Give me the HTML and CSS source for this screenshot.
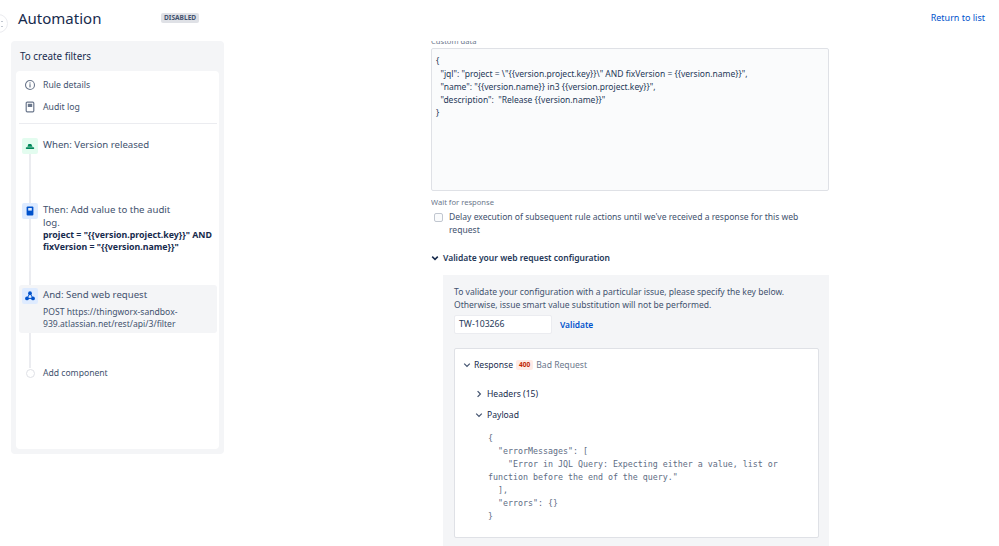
FILE: index.html
```html
<!DOCTYPE html>
<html lang="en">
<head>
<meta charset="utf-8">
<title>Automation</title>
<link rel="stylesheet" href="styles.css">
</head>
<body>
<div class="page">
  <header class="header">
    <span class="back-circle"><span class="back-dots"></span></span>
    <h1 class="title">Automation</h1>
    <span class="lozenge">DISABLED</span>
    <a class="return-link">Return to list</a>
  </header>
  <div class="content">
    <aside class="sidebar">
      <div class="rule-name">To create filters</div>
      <div class="rule-card">
        <div class="meta-row">
          <svg class="meta-icon" viewBox="0 0 12 12"><circle cx="6" cy="6" r="4.5" fill="none" stroke="#6b778c" stroke-width="1.1"/><rect x="5.4" y="5.2" width="1.2" height="3.2" fill="#6b778c"/><rect x="5.4" y="3.4" width="1.2" height="1.2" fill="#6b778c"/></svg>
          <span>Rule details</span>
        </div>
        <div class="meta-row">
          <svg class="meta-icon" viewBox="0 0 12 12"><rect x="2.2" y="1.2" width="7.6" height="9.6" rx="1" fill="none" stroke="#6b778c" stroke-width="1.2"/><rect x="3.8" y="2.8" width="4.4" height="3.2" fill="#6b778c"/></svg>
          <span>Audit log</span>
        </div>
        <div class="divider"></div>
        <div class="steps">
          <div class="rail"></div>
          <div class="step step-when">
            <span class="step-icon icon-green">
              <svg viewBox="0 0 12 12" class="step-svg"><path d="M3.4 6.8 L4.4 4 H7.2 L8.6 6.8 Z" fill="#00875a"/><rect x="1.8" y="7.2" width="8.4" height="1.8" rx=".7" fill="#00875a"/></svg>
            </span>
            <div class="step-title">When: Version released</div>
          </div>
          <div class="step step-then">
            <span class="step-icon icon-blue">
              <svg viewBox="0 0 12 12" class="step-svg"><rect x="2.6" y="1.4" width="6.8" height="9.2" rx="1" fill="#0052cc"/><rect x="4.2" y="3" width="3.6" height="2.6" fill="#deebff"/></svg>
            </span>
            <div class="step-body">
              <div class="step-title narrow">Then: Add value to the audit log.</div>
              <div class="step-bold">project = "{{version.project.key}}" AND fixVersion = "{{version.name}}"</div>
            </div>
          </div>
          <div class="step step-and">
            <span class="step-icon icon-blue">
              <svg viewBox="0 0 12 12" class="step-svg"><circle cx="6" cy="3.2" r="1.9" fill="#0052cc"/><circle cx="3" cy="8.4" r="1.9" fill="#0052cc"/><circle cx="9" cy="8.4" r="1.9" fill="#0052cc"/><path d="M6 3.2 L3 8.4 H9 Z" fill="none" stroke="#0052cc" stroke-width="1"/></svg>
            </span>
            <div class="step-body and-body">
              <div class="step-title">And: Send web request</div>
              <div class="step-desc">POST https://thingworx-sandbox-939.atlassian.net/rest/api/3/filter</div>
            </div>
          </div>
          <div class="step step-add">
            <span class="add-dot"></span>
            <div class="add-label">Add component</div>
          </div>
        </div>
      </div>
    </aside>
    <main class="main">
      <div class="clipped-label"><span class="clipped-text">Custom data</span></div>
      <div class="code-box">{
  "jql": "project = \"{{version.project.key}}\" AND fixVersion = {{version.name}}",
  "name": "{{version.name}} in3 {{version.project.key}}",
  "description":  "Release {{version.name}}"
}</div>
      <div class="field-label wait-label">Wait for response</div>
      <div class="check-row">
        <span class="checkbox"></span>
        <span class="check-text">Delay execution of subsequent rule actions until we've received a response for this web request</span>
      </div>
      <div class="validate-head">
        <svg class="chev" viewBox="0 0 8 8"><path d="M1.2 2.6 L4 5.4 L6.8 2.6" fill="none" stroke="#172b4d" stroke-width="1.5"/></svg>
        <span>Validate your web request configuration</span>
      </div>
      <section class="validate-panel">
        <p class="validate-text">To validate your configuration with a particular issue, please specify the key below. Otherwise, issue smart value substitution will not be performed.</p>
        <div class="validate-row">
          <div class="key-input">TW-103266</div>
          <a class="validate-link">Validate</a>
        </div>
        <div class="response-card">
          <div class="response-head">
            <svg class="chev" viewBox="0 0 8 8"><path d="M1.2 2.6 L4 5.4 L6.8 2.6" fill="none" stroke="#42526e" stroke-width="1.2"/></svg>
            <span class="response-word">Response</span>
            <span class="status-badge">400</span>
            <span class="status-text">Bad Request</span>
          </div>
          <div class="sub-head headers-head">
            <svg class="chev" viewBox="0 0 8 8"><path d="M2.6 1.2 L5.4 4 L2.6 6.8" fill="none" stroke="#42526e" stroke-width="1.2"/></svg>
            <span>Headers (15)</span>
          </div>
          <div class="sub-head payload-head">
            <svg class="chev" viewBox="0 0 8 8"><path d="M1.2 2.6 L4 5.4 L6.8 2.6" fill="none" stroke="#42526e" stroke-width="1.2"/></svg>
            <span>Payload</span>
          </div>
          <pre class="payload">{
  "errorMessages": [
    "Error in JQL Query: Expecting either a value, list or
function before the end of the query."
  ],
  "errors": {}
}</pre>
        </div>
      </section>
    </main>
  </div>
</div>
</body>
</html>
```
FILE: styles.css
```css
* { box-sizing: border-box; }
html, body { margin: 0; height: 100%; overflow: hidden; background: #fff; }
body { font-family: "Noto Sans", "Open Sans", sans-serif; font-size: 10px; color: #42526e; }
.page { width: 999px; height: 546px; overflow: hidden; display: flex; flex-direction: column; }

.header { height: 41px; flex: none; display: flex; align-items: flex-start; position: relative; }
.back-circle { position: absolute; left: -11px; top: 14px; width: 19px; height: 19px; border-radius: 50%; border: 1px solid #ebecf0; background: #fff; }
.back-dots { position: absolute; left: 11px; top: 6px; width: 2px; height: 6px; border-top: 1px solid #c1c7d0; border-bottom: 1px solid #c1c7d0; }
.title { margin: 7px 0 0 18px; width: 143px; font-size: 15px; line-height: 22px; font-weight: 400; color: #172b4d; }
.lozenge { margin-top: 13px; height: 10px; padding: 0 3px; border-radius: 2px; background: #dfe1e6; color: #42526e; font-size: 6.6px; line-height: 10px; font-weight: 700; }
.return-link { margin: 11px 14px 0 auto; font-size: 9px; line-height: 13px; color: #0052cc; }

.content { flex: 1; min-height: 0; display: flex; align-items: flex-start; }
.sidebar { width: 213px; height: 413px; margin-left: 11px; padding: 0 5px 5px; background: #f4f5f7; border-radius: 4px; display: flex; flex-direction: column; flex: none; }
.rule-name { height: 30px; padding: 8px 4px 0; font-size: 9.85px; line-height: 14px; color: #172b4d; }
.rule-card { flex: 1; background: #fff; border-radius: 4px; padding: 3px 2px 0 3px; }
.meta-row { height: 22px; display: flex; align-items: center; gap: 7px; padding-left: 5px; font-size: 8.7px; color: #42526e; }
.meta-icon { width: 12px; height: 12px; flex: none; }
.divider { height: 1px; background: #ebecf0; margin-top: 5px; }

.steps { position: relative; }
.rail { position: absolute; left: 10px; top: 24px; width: 2px; height: 220px; background: #ebecf0; }
.step { position: relative; display: flex; gap: 5px; }
.step-icon { width: 16px; height: 16px; flex: none; margin-left: 3px; border-radius: 2px; display: flex; align-items: center; justify-content: center; }
.icon-green { background: #e3fcef; }
.icon-blue { background: #deebff; }
.step-svg { width: 12px; height: 12px; }
.step-when { height: 65px; padding-top: 14px; }
.step-then { height: 96px; padding-top: 14px; }
.step-and { height: 48px; background: #f4f5f7; border-radius: 3px; padding-top: 3px; }
.step-add { margin-top: 33px; align-items: center; height: 14px; }
.step-title { font-size: 9.65px; line-height: 13px; color: #42526e; }
.narrow { width: 135px; }
.step-bold { font-size: 8.8px; line-height: 12px; font-weight: 700; color: #172b4d; width: 172px; }
.and-body { padding-top: 0; }
.step-desc { margin-top: 5px; font-size: 8.6px; line-height: 12px; color: #42526e; width: 145px; }
.add-dot { width: 9px; height: 9px; margin-left: 7px; margin-right: 3px; border-radius: 50%; border: 1.5px solid #dfe1e6; background: #fff; flex: none; }
.add-label { font-size: 8.6px; color: #42526e; }

.main { width: 398px; height: 505px; margin-left: 207px; flex: none; overflow: hidden; }
.field-label { font-size: 7.6px; line-height: 11px; color: #6b778c; }
.clipped-label { height: 7px; overflow: hidden; font-size: 7.6px; line-height: 11px; color: #6b778c; }
.clipped-text { display: block; margin-top: -5px; }
.code-box { height: 143px; background: #fafbfc; border: 1px solid #dfe1e6; border-radius: 2px; padding: 5px 4px; font-size: 8.5px; line-height: 13px; color: #253858; white-space: pre-wrap; }
.wait-label { margin-top: 6px; }
.check-row { display: flex; gap: 6px; margin-top: 3px; padding-left: 3px; font-size: 8.55px; line-height: 13px; color: #42526e; }
.checkbox { width: 9px; height: 9px; flex: none; margin-top: 2px; border: 1px solid #c1c7d0; border-radius: 2px; background: #fafbfc; }
.check-text { width: 365px; }
.validate-head { display: flex; align-items: center; gap: 4px; margin-top: 14px; font-size: 8.5px; line-height: 13px; font-weight: 600; color: #253858; }
.chev { width: 8px; height: 8px; flex: none; }
.validate-panel { width: 386px; height: 280px; margin: 11px 0 0 12px; padding: 11px 11px; background: #f4f5f7; }
.validate-text { margin: 0; font-size: 8.56px; line-height: 13px; color: #42526e; width: 360px; }
.validate-row { display: flex; align-items: center; gap: 8px; margin-top: 3px; }
.key-input { width: 98px; height: 19px; background: #fff; border: 1px solid #ebecf0; border-radius: 2px; padding: 0 4px; font-size: 8.7px; line-height: 17px; color: #253858; }
.validate-link { font-size: 8.4px; font-weight: 600; color: #0052cc; }
.response-card { width: 365px; height: 190px; margin-top: 14px; background: #fff; border: 1px solid #dfe1e6; border-radius: 2px; padding: 9px 8px 0; }
.response-head { display: flex; align-items: center; height: 13px; font-size: 8.6px; color: #172b4d; }
.response-word { margin-left: 3px; }
.status-badge { margin-left: 3px; height: 10px; padding: 0 3px; background: #ffebe6; color: #bf2600; font-size: 6.5px; line-height: 10px; font-weight: 700; border-radius: 2px; }
.status-text { margin-left: 3px; color: #6b778c; }
.sub-head { display: flex; align-items: center; gap: 4px; margin-left: 12px; height: 13px; font-size: 8.6px; color: #172b4d; }
.headers-head { margin-top: 16px; }
.payload-head { margin-top: 8px; }
.payload { margin: 11px 0 0 25px; width: 320px; font-family: "DejaVu Sans Mono", "Liberation Mono", monospace; font-size: 8.3px; line-height: 13px; color: #5e6c84; white-space: pre; }
```
